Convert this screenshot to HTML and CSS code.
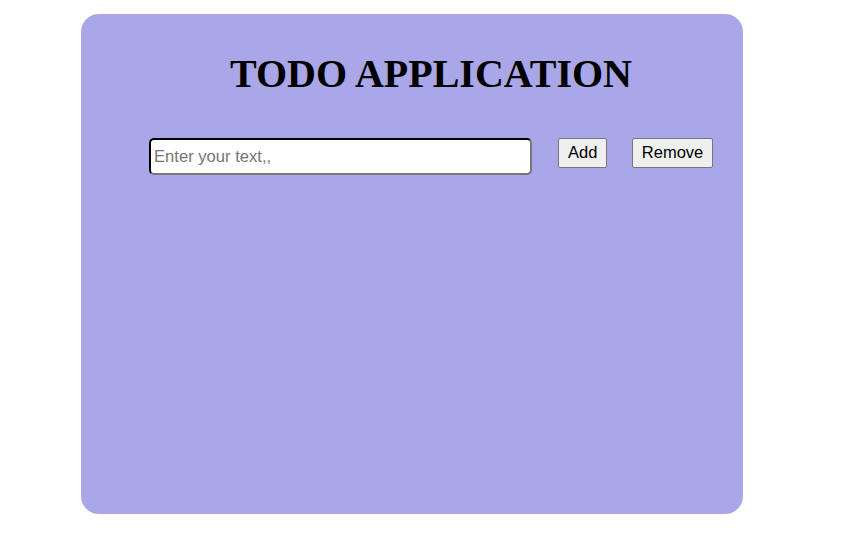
FILE: index.html
```html
<!DOCTYPE html>
<html>
<head>
<meta charset="utf-8">
<link rel="stylesheet" href="styles.css">
</head>
<body>
<div class="card">
  <h1 class="title">TODO APPLICATION</h1>
  <div class="controls">
    <input class="entry" type="text" placeholder="Enter your text,,">
    <button class="btn">Add</button>
    <button class="btn">Remove</button>
  </div>
</div>
</body>
</html>
```
FILE: styles.css
```css
html, body {
  margin: 0;
  padding: 0;
  background: #ffffff;
}
body {
  padding: 14px 0 0 81px;
}
.card {
  width: 662px;
  height: 500px;
  box-sizing: border-box;
  background: #a9a7e7;
  border-radius: 18px;
  padding: 0 30px 0 68px;
  display: flex;
  flex-direction: column;
}
.title {
  margin: 37px 0 0;
  font-family: "Liberation Serif", "Times New Roman", serif;
  font-weight: bold;
  font-size: 40px;
  line-height: 46px;
  text-align: center;
  color: #000;
}
.controls {
  display: flex;
  align-items: flex-start;
  gap: 25px;
  margin-top: 41px;
}
.entry {
  flex-shrink: 0;
  width: 383px;
  height: 37px;
  box-sizing: border-box;
  border: 2px inset #767676;
  border-top-color: #1a1a1a;
  border-left-color: #1a1a1a;
  border-radius: 5px;
  padding: 0 3px;
  margin: 0 1px 0 0;
  font-family: "Liberation Sans", Arial, sans-serif;
  font-size: 16.6px;
  background: #fff;
}
.entry::placeholder {
  color: #757575;
}
.btn {
  flex-shrink: 0;
  height: 30px;
  box-sizing: border-box;
  margin: 0;
  padding: 0 8.5px 1px 9px;
  font-family: "Liberation Sans", Arial, sans-serif;
  font-size: 16.5px;
  color: #000;
  background: #efefef;
  border: 1px solid #767676;
  border-radius: 2px;
}
```
